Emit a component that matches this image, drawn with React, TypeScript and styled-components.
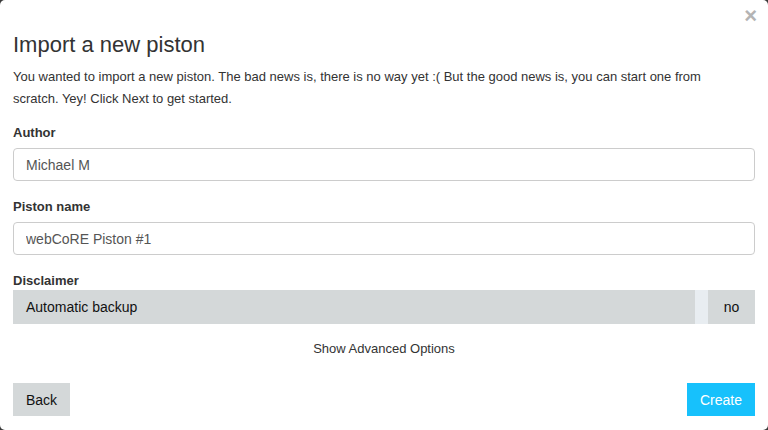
import React from "react";
import styled, { createGlobalStyle } from "styled-components";

const Global = createGlobalStyle`
  html, body { margin: 0; padding: 0; background: #3a3a3a; }
  body { font-family: "Liberation Sans", Arial, sans-serif; }
  * { box-sizing: border-box; }
`;

const Modal = styled.div`
  width: 768px;
  height: 430px;
  background: #fff;
  border-radius: 5px;
  overflow: hidden;
  display: flex;
  flex-direction: column;
  position: relative;
  color: #333;
`;

const Close = styled.button`
  position: absolute;
  top: 4px;
  right: 11px;
  border: 0;
  background: transparent;
  color: #b4b4b4;
  font-family: "Liberation Sans", Arial, sans-serif;
  font-size: 22px;
  font-weight: bold;
  line-height: 24px;
  padding: 0;
  cursor: pointer;
`;

const Body = styled.div`
  padding: 31px 13px 0 13px;
  display: flex;
  flex-direction: column;
`;

const Title = styled.h4`
  margin: 0;
  font-family: "Liberation Sans", Arial, sans-serif;
  font-size: 22px;
  font-weight: normal;
  line-height: 28px;
  color: #333;
`;

const Intro = styled.p`
  margin: 7px 0 0 0;
  max-width: 722px;
  font-size: 13px;
  line-height: 22px;
  color: #333;
`;

const Group = styled.div<{ top: number }>`
  display: flex;
  flex-direction: column;
  margin-top: ${(p) => p.top}px;
`;

const Label = styled.label`
  font-size: 13px;
  font-weight: bold;
  line-height: 16px;
  margin-bottom: 7px;
  color: #333;
`;

const Input = styled.input`
  height: 33px;
  width: 100%;
  border: 1px solid #ccc;
  border-radius: 4px;
  padding: 0 12px;
  font-family: "Liberation Sans", Arial, sans-serif;
  font-size: 14px;
  color: #555;
  background: #fff;
  outline: none;
`;

const Toggle = styled.div`
  height: 34px;
  margin-top: -6px;
  background: #d4d8d9;
  display: flex;
  align-items: stretch;
`;

const ToggleLabel = styled.span`
  flex: 1;
  display: flex;
  align-items: center;
  padding-left: 13px;
  font-size: 14px;
  color: #111;
`;

const ToggleKnob = styled.span`
  width: 13px;
  background: #e8edf1;
`;

const ToggleValue = styled.span`
  width: 47px;
  display: flex;
  align-items: center;
  justify-content: center;
  font-size: 14px;
  color: #111;
`;

const Advanced = styled.div`
  text-align: center;
  font-size: 13px;
  line-height: 16px;
  color: #333;
  margin-top: 17px;
`;

const Footer = styled.div`
  display: flex;
  justify-content: space-between;
  padding: 0 13px;
  margin-top: 26px;
`;

const Button = styled.button<{ primary?: boolean }>`
  height: 33px;
  border: 0;
  padding: 0 13px;
  font-family: "Liberation Sans", Arial, sans-serif;
  font-size: 14px;
  background: ${(p) => (p.primary ? "#17c1fc" : "#d4d8d9")};
  color: ${(p) => (p.primary ? "#fff" : "#111")};
  cursor: pointer;
`;

export default function App() {
  return (
    <>
      <Global />
      <Modal>
        <Close aria-label="Close">×</Close>
        <Body>
          <Title>Import a new piston</Title>
          <Intro>
            You wanted to import a new piston. The bad news is, there is no way yet :( But the good news is, you can start one from scratch. Yey! Click Next to get started.
          </Intro>
          <Group top={15}>
            <Label>Author</Label>
            <Input defaultValue="Michael M" />
          </Group>
          <Group top={18}>
            <Label>Piston name</Label>
            <Input defaultValue="webCoRE Piston #1" />
          </Group>
          <Group top={18}>
            <Label>Disclaimer</Label>
            <Toggle>
              <ToggleLabel>Automatic backup</ToggleLabel>
              <ToggleKnob />
              <ToggleValue>no</ToggleValue>
            </Toggle>
          </Group>
          <Advanced>Show Advanced Options</Advanced>
        </Body>
        <Footer>
          <Button>Back</Button>
          <Button primary>Create</Button>
        </Footer>
      </Modal>
    </>
  );
}
